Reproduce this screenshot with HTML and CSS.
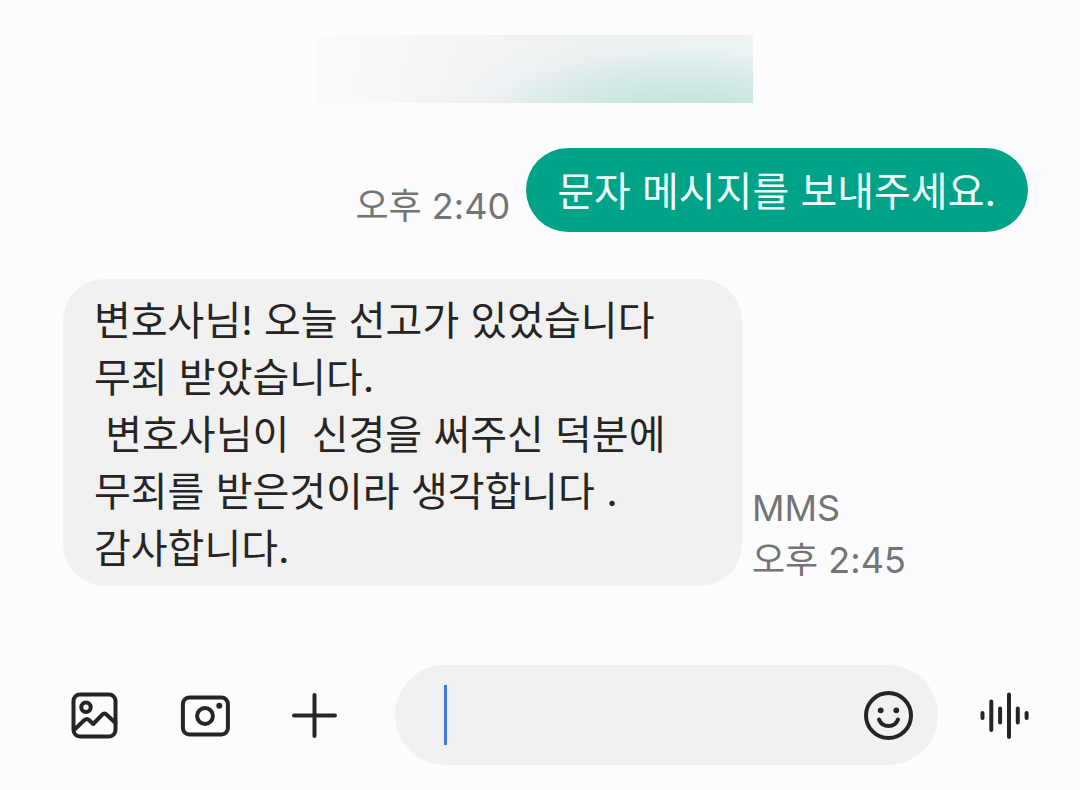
FILE: index.html
```html
<!DOCTYPE html>
<html lang="ko">
<head>
<meta charset="utf-8">
<meta name="viewport" content="width=device-width, initial-scale=1">
<title>문자 메시지</title>
<link rel="stylesheet" href="styles.css">
</head>
<body>
<main class="thread">
  <div class="banner"></div>
  <section class="row row-sent">
    <div class="meta"><time>오후 2:40</time></div>
    <p class="bubble bubble-sent">문자 메시지를 보내주세요.</p>
  </section>
  <section class="row row-received">
    <p class="bubble bubble-received">변호사님! 오늘 선고가 있었습니다
무죄 받았습니다.
 변호사님이  신경을 써주신 덕분에
무죄를 받은것이라 생각합니다 .
감사합니다.</p>
    <div class="meta"><span>MMS</span><time>오후 2:45</time></div>
  </section>
</main>
<form class="composer">
  <div class="tools">
    <button class="icon-button" type="button" aria-label="사진">
      <svg class="icon" viewBox="0 0 50 50"><rect x="3.500" y="4.500" width="42" height="42" rx="6.500"/><circle cx="16" cy="17.300" r="4.700"/><path d="M4 40 14.500 30Q17 28 19 30L23.200 34 32 24.800Q34.500 22.500 37 25L45.500 33"/></svg>
    </button>
    <button class="icon-button" type="button" aria-label="카메라">
      <svg class="icon" viewBox="0 0 50 50"><rect x="2.900" y="7.500" width="45" height="37" rx="6.500"/><circle cx="25" cy="26" r="7.900"/><circle class="dot" cx="39.300" cy="15.700" r="3"/></svg>
    </button>
    <button class="icon-button" type="button" aria-label="추가">
      <svg class="icon" viewBox="0 0 50 50"><path d="M4 25.500H45M24.500 5V46"/></svg>
    </button>
  </div>
  <div class="field">
    <span class="caret"></span>
    <input class="input" type="text" aria-label="메시지 입력">
    <button class="icon-button" type="button" aria-label="이모티콘">
      <svg class="icon" viewBox="0 0 50 50"><circle cx="25.500" cy="25.500" r="22.500"/><circle class="dot" cx="17.700" cy="20.300" r="2.900"/><circle class="dot" cx="33.300" cy="20.300" r="2.900"/><path d="M16 29.500C19.500 38.200 31.500 38.200 35 29.500"/></svg>
    </button>
  </div>
  <button class="icon-button" type="button" aria-label="음성">
    <svg class="icon" viewBox="0 0 50 50"><path d="M3.500 23V28M12.300 11.500V40M21.100 18.500V32.500M30 4.500V47M38.800 18.500V32.500M47.600 23V28"/></svg>
  </button>
</form>
</body>
</html>
```
FILE: styles.css
```css
* { box-sizing: border-box; }

body {
  margin: 0;
  min-height: 100vh;
  display: flex;
  flex-direction: column;
  justify-content: space-between;
  background: #fcfcfe;
  color: #252525;
  font-family: Inter, "Noto Sans CJK KR", sans-serif;
}

.thread {
  display: flex;
  flex-direction: column;
  padding: 35px 52px 0 63px;
}

.banner {
  align-self: center;
  width: 437px;
  max-width: 100%;
  height: 68px;
  margin-right: 22px;
  margin-bottom: 45px;
  background:
    radial-gradient(ellipse 60% 120% at 84% 112%, #c3e4de 0%, #c7e5e0 20%, rgba(212, 233, 229, 0.8) 50%, rgba(230, 239, 240, 0.4) 75%, rgba(236, 240, 241, 0) 100%),
    linear-gradient(95deg, #fafafb 0%, #f3f3f5 35%, #ecf0f0 65%, #eef5f4 100%);
}

.row { display: flex; align-items: flex-end; }
.row-sent { justify-content: flex-end; gap: 16px; margin-bottom: 47px; }
.row-received { gap: 10px; }

.bubble {
  margin: 0;
  font-size: 40px;
  line-height: 57px;
  white-space: pre-wrap;
  border-radius: 42px;
}

.bubble-sent {
  padding: 15px 32px 12px 31px;
  background: #00a388;
  color: #f0fffc;
}

.bubble-received {
  flex: 0 1 679px;
  padding: 13px 31px 9px;
  background: #f1f1f1;
}

.meta {
  display: flex;
  flex-direction: column;
  color: #747474;
  font-size: 36px;
  line-height: 52px;
  white-space: nowrap;
}

.composer {
  display: flex;
  align-items: center;
  padding: 0 51px 25px 70px;
}

.tools { display: flex; gap: 60px; margin-right: 55px; }

.icon-button {
  display: flex;
  flex: none;
  padding: 0;
  border: 0;
  background: none;
  color: #252525;
}

.icon {
  width: 50px;
  height: 50px;
  fill: none;
  stroke: currentColor;
  stroke-width: 4px;
  stroke-linecap: round;
  stroke-linejoin: round;
}

.dot { fill: currentColor; stroke: none; }

.field {
  display: flex;
  flex: 1;
  align-items: center;
  min-width: 0;
  height: 100px;
  margin-right: 41px;
  padding: 0 25px 0 49px;
  border-radius: 50px;
  background: #f1f1f1;
}

.caret { width: 3px; height: 60px; background: #4079df; }

.input {
  flex: 1;
  min-width: 0;
  height: 60px;
  padding: 0;
  border: 0;
  outline: 0;
  background: none;
  font: inherit;
  font-size: 40px;
}
```
